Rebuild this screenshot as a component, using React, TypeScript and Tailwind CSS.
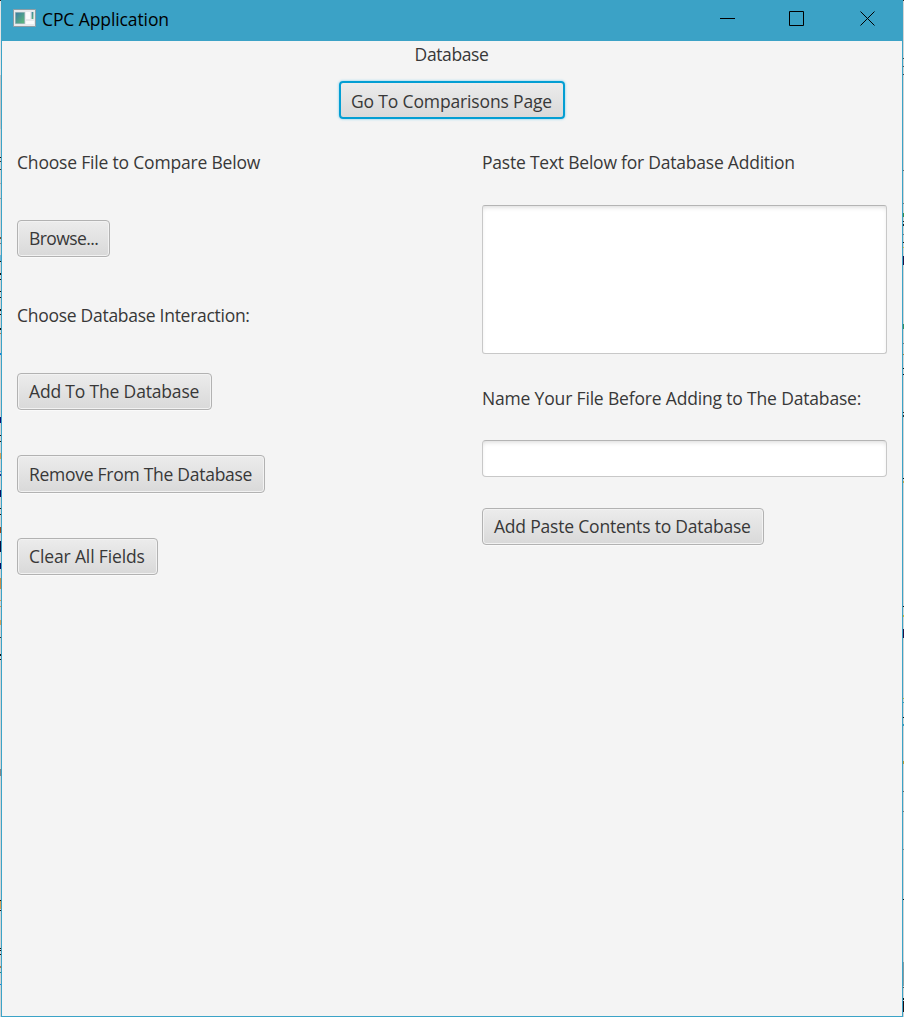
import React from "react";

type Mark = [top: number, height: number, color: string];

const leftMarks: Mark[] = [
  [0, 1, "#222"], [1, 74, "#e4e4e4"], [75, 54, "#c4c4c4"], [157, 1, "#111"], [161, 1, "#333"], [169, 1, "#333"],
  [183, 1, "#aaa"], [198, 1, "#999"], [237, 2, "#7a5030"], [243, 1, "#777"], [255, 6, "#73b4d4"], [261, 1, "#111"],
  [273, 2, "#111"], [279, 1, "#111"], [291, 1, "#111"], [297, 1, "#111"], [309, 2, "#111"], [314, 1, "#111"],
  [328, 2, "#111"], [333, 1, "#a87848"], [353, 2, "#1585d8"], [417, 6, "#0b0b70"], [435, 1, "#111"], [441, 1, "#111"],
  [453, 6, "#d9a055"], [471, 1, "#468ed5"], [474, 2, "#24308a"], [490, 7, "#0b0b60"], [508, 1, "#111"], [514, 1, "#111"],
  [527, 6, "#964315"], [541, 11, "#0a0a3c"], [563, 6, "#0b0b60"], [578, 11, "#cb8c47"], [600, 1, "#d79645"],
  [606, 1, "#d79645"], [620, 5, "#d9a055"], [637, 1, "#333"], [654, 2, "#111"], [659, 1, "#111"],
  [769, 7, "#858585"], [900, 1, "#111"], [901, 8, "#d9a055"], [910, 1, "#111"], [948, 1, "#111"], [950, 1, "#111"],
  [954, 1, "#111"], [966, 2, "#ad7c4b"], [972, 1, "#1a8080"], [984, 1, "#1585d8"],
];

const rightMarks: Mark[] = [
  [0, 1, "#222"], [58, 1, "#444"], [66, 1, "#555"], [74, 1, "#444"], [170, 1, "#666"], [203, 1, "#777"],
  [213, 4, "#3c8c48"], [221, 1, "#222"], [224, 2, "#222"], [234, 1, "#777"], [242, 1, "#111"], [247, 1, "#d4bd45"],
  [256, 9, "#251044"], [324, 5, "#3c8c58"], [343, 1, "#777"], [354, 1, "#a98532"], [368, 1, "#111"], [374, 1, "#111"],
  [412, 1, "#222"], [415, 2, "#333"], [478, 1, "#111"], [481, 2, "#c2a849"], [606, 1, "#111"], [615, 2, "#c8b93a"],
  [629, 9, "#251044"], [698, 1, "#b9b13c"], [702, 1, "#3b9bb5"], [717, 1, "#111"], [724, 2, "#3b9bb5"],
  [761, 3, "#b49b32"], [791, 1, "#666"], [811, 1, "#777"], [849, 1, "#888"], [899, 1, "#111"],
  [962, 24, "#8b9ba0"], [987, 1, "#555"], [998, 2, "#111"], [1001, 11, "#210d12"],
];

function Strip({ marks }: { marks: Mark[] }) {
  return (
    <svg className="h-[1017px] w-px shrink-0" viewBox="0 0 1 1017" shapeRendering="crispEdges">
      {marks.map(([top, height, color]) => (
        <rect key={top} y={top} width="1" height={height} fill={color} />
      ))}
    </svg>
  );
}

function Label({ children, className = "" }: { children: React.ReactNode; className?: string }) {
  return <div className={`h-6 text-[17.5px] leading-6 whitespace-nowrap ${className}`}>{children}</div>;
}

function Button({ children, className = "", focused = false }: { children: React.ReactNode; className?: string; focused?: boolean }) {
  const frame = focused
    ? "border-2 border-[#039ed3] pt-px pl-[10px] shadow-[0_0_2px_1px_#b8e1f0]"
    : "border border-[#b2b2b2] pb-px pl-[11px] shadow-[inset_0_0_0_1px_#f2f2f2,0_1px_0_#fafafa]";
  return (
    <button
      className={`flex items-center rounded-[4px] bg-linear-to-b from-[#ececec] to-[#d9d9d9] text-[17.5px] leading-6 whitespace-nowrap ${frame} ${className}`}
    >
      <span>{children}</span>
    </button>
  );
}

export default function App() {
  return (
    <div className="flex h-[1017px] w-[904px] overflow-hidden bg-[#d4d4d4] font-['Open_Sans',sans-serif] text-[#383838]">
      <Strip marks={leftMarks} />
      <div className="flex w-[902px] flex-col border-x border-b border-[#3ba3c7] bg-[#f4f4f4]">
        <header className="flex h-[41px] shrink-0 bg-[#3ba2c6] pl-[11px] text-black">
          <svg className="mt-[9px] h-[18px] w-[23px]" viewBox="0 0 23 18">
            <defs>
              <linearGradient id="pane" x1="0" y1="0" x2="1" y2="1">
                <stop offset="0" stopColor="#397ba5" />
                <stop offset="1" stopColor="#60bd78" />
              </linearGradient>
            </defs>
            <path d="M.5.5h22v17H.5z" fill="#e8eaec" stroke="#8d9da5" />
            <path d="M2.5 3.5h9v11h-9z" fill="url(#pane)" stroke="#7fa5a8" strokeWidth=".6" />
            <path d="M13 3h4v7h-4zM13 12h8v3h-8z" fill="#fbfbfb" />
            <path d="M18.6 3h1.8v7h-1.8z" fill="url(#pane)" />
          </svg>
          <div className="ml-[6px] w-[160px] pt-[7px] text-[17.5px] leading-6 tracking-[-0.1px]">CPC Application</div>
          <svg className="ml-auto h-[41px] w-[182px]" viewBox="0 0 182 41" fill="none" stroke="#000">
            <path d="M0 18.5h15M69.5 11.5h14v14h-14zM140.5 11.5l14 14M154.5 11.5l-14 14" />
          </svg>
        </header>
        <main className="flex flex-1 flex-col items-center">
          <Label className="mt-px mr-px tracking-[-0.4px]">Database</Label>
          <Button focused className="mt-[15px] h-[38px] w-[226px] tracking-[-0.15px]">Go To Comparisons Page</Button>
          <div className="mt-[31px] flex w-full px-[15px]">
            <section className="flex w-[465px] flex-col items-start">
              <Label className="tracking-[-0.19px]">Choose File to Compare Below</Label>
              <Button className="mt-[46px] h-[37px] w-[93px] tracking-[-0.58px]">Browse...</Button>
              <Label className="mt-[46px] tracking-[-0.28px]">Choose Database Interaction:</Label>
              <Button className="mt-[46px] h-[37px] w-[195px] tracking-[-0.17px]">Add To The Database</Button>
              <Button className="mt-[45px] h-[38px] w-[248px] tracking-[-0.27px]">Remove From The Database</Button>
              <Button className="mt-[45px] h-[37px] w-[141px] tracking-[-0.13px]">Clear All Fields</Button>
            </section>
            <section className="flex w-[405px] flex-col items-start">
              <Label className="tracking-[-0.22px]">Paste Text Below for Database Addition</Label>
              <textarea className="mt-[31px] h-[149px] w-full resize-none rounded-[3px] border border-[#c8c8c8] border-t-[#b4b4b4] bg-white shadow-[inset_0_3px_5px_-2px_#d8d8d8] outline-none" />
              <Label className="mt-[32px] tracking-[-0.17px]">Name Your File Before Adding to The Database:</Label>
              <input className="mt-[30px] h-[37px] w-full rounded-[4px] border border-[#c8c8c8] border-t-[#b4b4b4] bg-white shadow-[inset_0_3px_5px_-2px_#d8d8d8] outline-none" />
              <Button className="mt-[31px] h-[37px] w-[282px] tracking-[-0.2px]">Add Paste Contents to Database</Button>
            </section>
          </div>
        </main>
      </div>
      <Strip marks={rightMarks} />
    </div>
  );
}
